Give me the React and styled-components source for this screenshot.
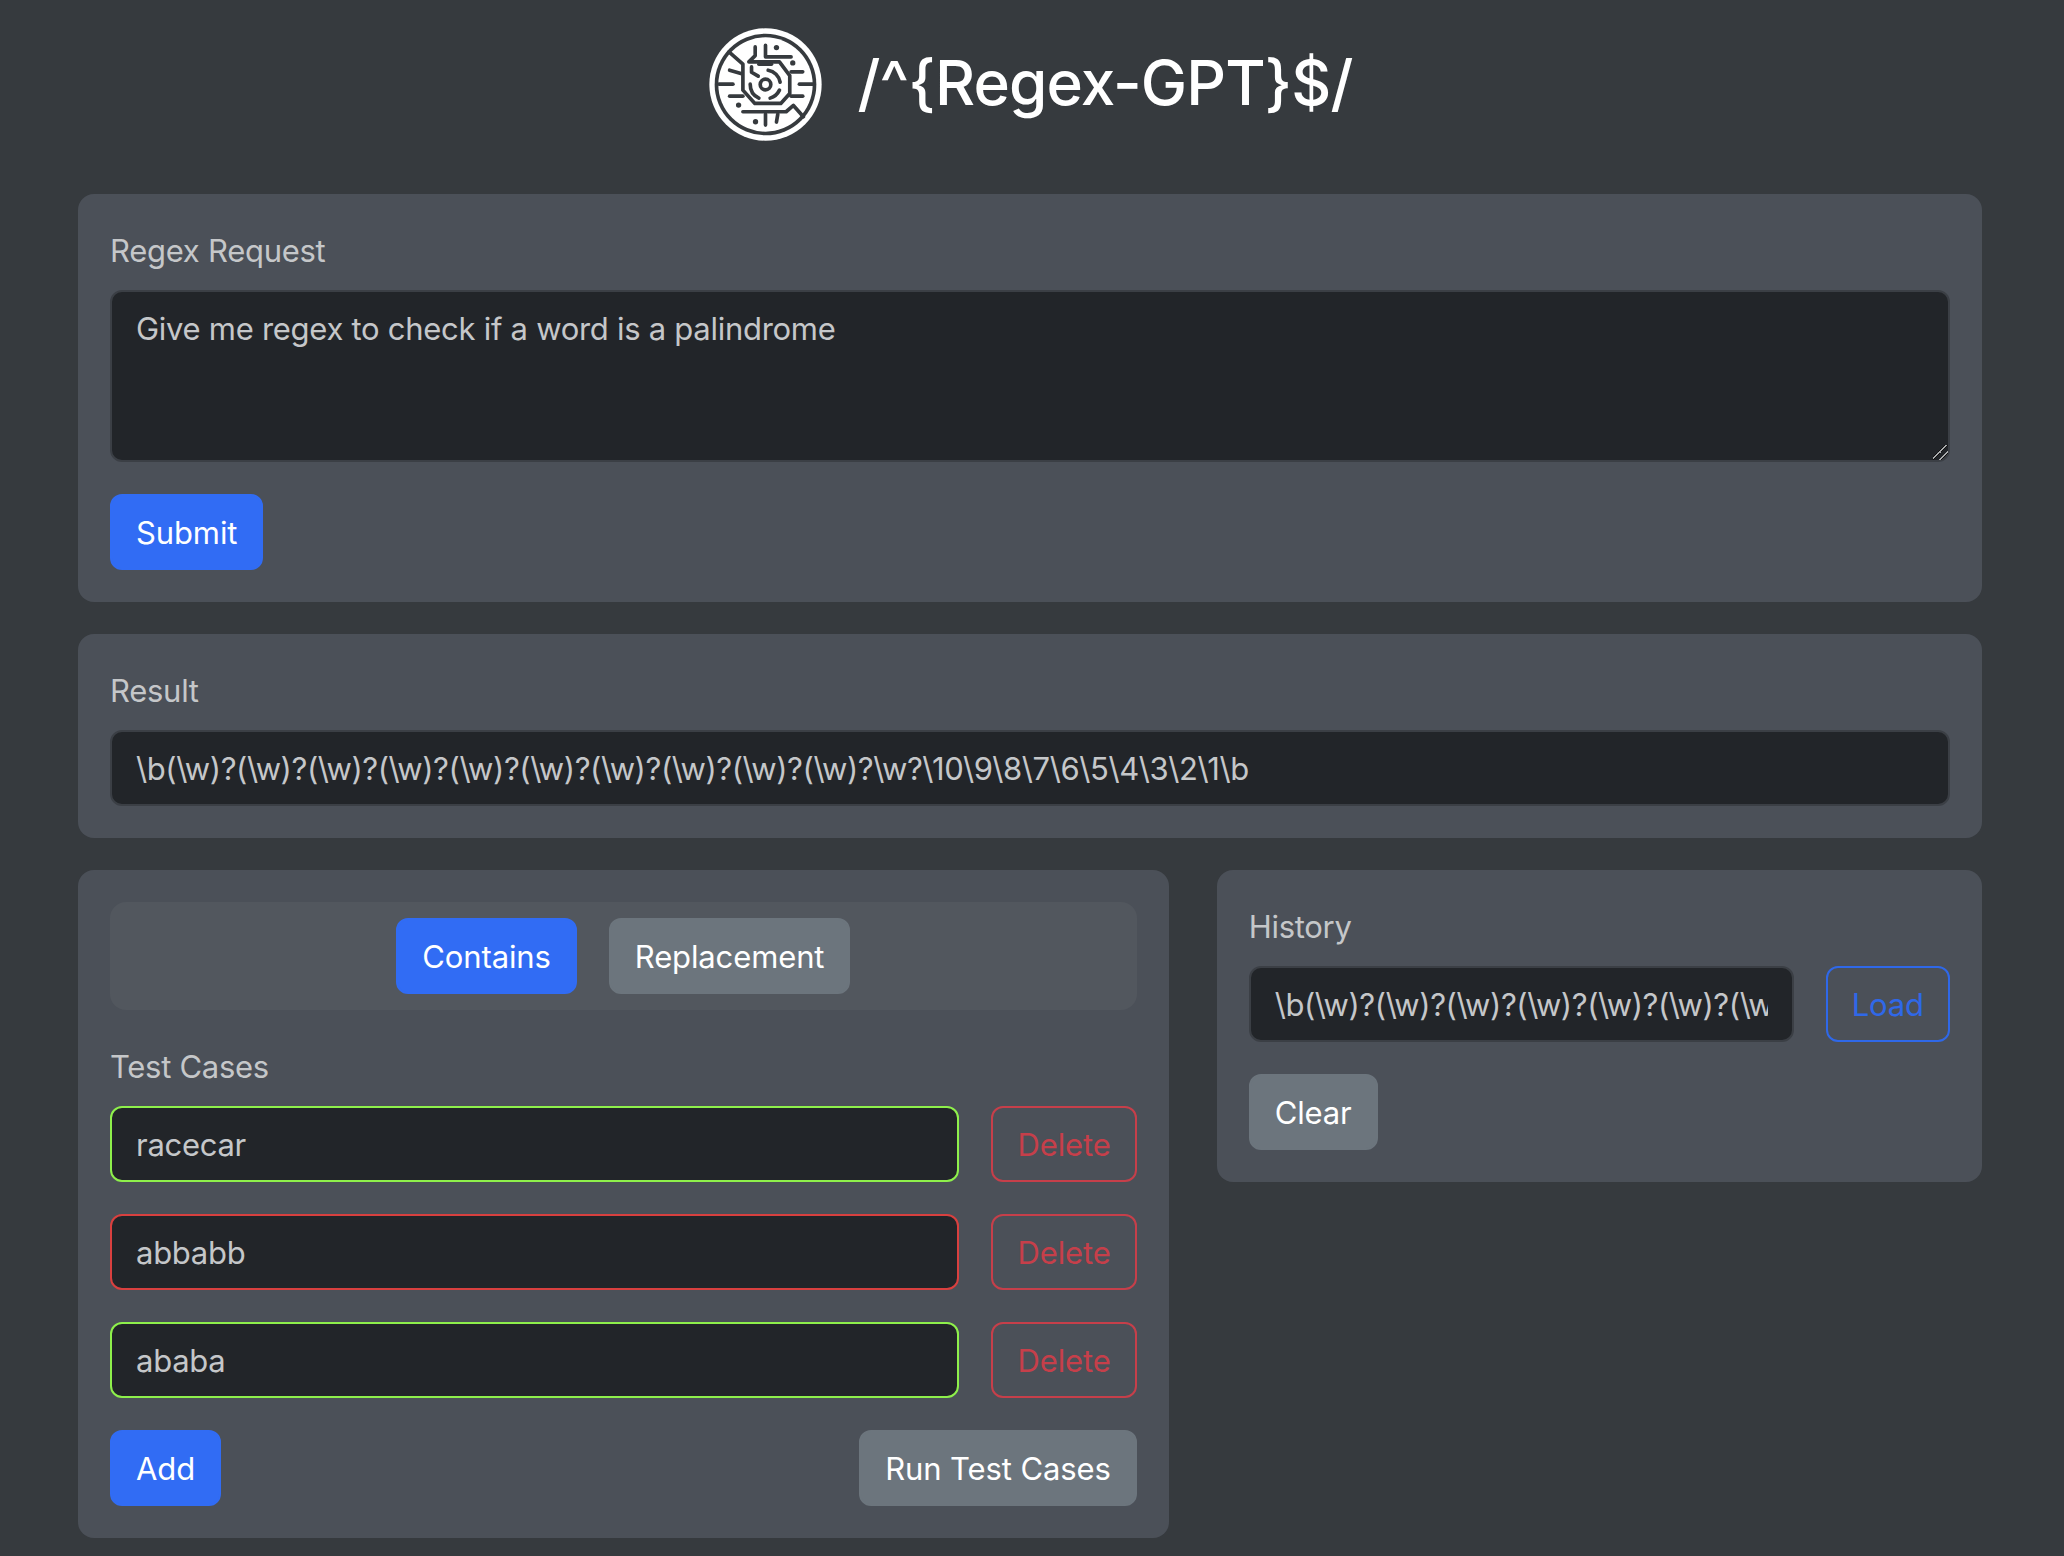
import React from 'react';
import styled, { createGlobalStyle } from 'styled-components';

const GlobalStyle = createGlobalStyle`
  html, body {
    margin: 0;
    padding: 0;
    background: #363a3e;
  }
  body {
    font-family: Inter, "Liberation Sans", sans-serif;
    font-size: 31px;
    letter-spacing: -0.28px;
    line-height: 48px;
    color: #c5c7c9;
  }
`

const Page = styled.div`
  display: flex;
  flex-direction: column;
  gap: 32px;
  box-sizing: border-box;
  width: 2064px;
  height: 1556px;
  overflow: hidden;
  padding: 0 82px 18px 78px;
`

const Header = styled.header`
  display: flex;
  align-items: center;
  justify-content: center;
  gap: 36px;
  height: 162px;
  padding: 7px 0 0 1px;
  box-sizing: border-box;
`

const Title = styled.h1`
  margin: 0 0 4px;
  font-size: 62px;
  letter-spacing: -0.88px;
  line-height: 76px;
  font-weight: 500;
  color: #fff;
`

const Panel = styled.section`
  background: #4b5058;
  border-radius: 16px;
  padding: 32px;
`

const Columns = styled.div`
  display: grid;
  grid-template-columns: 1090.67px 765.33px;
  column-gap: 48px;
  align-items: start;
`

const Label = styled.label`
  display: block;
  padding-top: 1px;
  margin-bottom: 15px;
`

const TextArea = styled.textarea`
  display: block;
  box-sizing: border-box;
  width: 100%;
  height: 172px;
  padding: 13px 24px 11px;
  background: #222529;
  border: 2px solid #3b3f45;
  border-radius: 12px;
  color: #c5c7c9;
  font: inherit;
  letter-spacing: inherit;
  outline: none;
  resize: vertical;

  &::-webkit-resizer {
    background: linear-gradient(
      135deg,
      transparent 40%,
      #111 40% 43%,
      #a9abad 43% 50%,
      #111 50% 53%,
      transparent 53% 68%,
      #111 68% 70%,
      #a9abad 70% 76%,
      #111 76% 78%,
      transparent 78%
    );
  }
`

const Input = styled.input`
  display: block;
  box-sizing: border-box;
  flex: 1;
  min-width: 0;
  width: 100%;
  height: 76px;
  padding: 1px 24px 0;
  background: #222529;
  border: 2px solid ${p => p.$border || '#3b3f45'};
  border-radius: 12px;
  color: #c5c7c9;
  font: inherit;
  letter-spacing: ${p => (p.$regex ? '-0.42px' : 'inherit')};
  outline: none;
`

const buttonColors = {
  primary: 'background: #316cf4; border-color: #316cf4; color: #fff;',
  secondary: 'background: #6c757d; border-color: #6c757d; color: #fff;',
  outlinePrimary: 'background: transparent; border-color: #2f68e8; color: #2f68e8;',
  outlineDanger: 'background: transparent; border-color: #c63f4a; color: #c63f4a;',
}

const Button = styled.button`
  flex: none;
  box-sizing: border-box;
  height: 76px;
  padding: 1px 24px 0;
  border: 2px solid;
  border-radius: 12px;
  font: inherit;
  letter-spacing: -0.12px;
  ${p => buttonColors[p.$variant]}
`

const SubmitRow = styled.div`
  display: flex;
  margin-top: 32px;
`

const Tabs = styled.div`
  display: flex;
  justify-content: center;
  gap: 32px;
  padding: 16px;
  margin-bottom: 32px;
  background: #52575e;
  border-radius: 16px;
`

const Row = styled.div`
  display: flex;
  gap: 32px;
  margin-bottom: 32px;
`

const Actions = styled.div`
  display: flex;
  justify-content: space-between;
`

const Logo = () => (
  <svg width="113" height="113" viewBox="88 53 340 340" aria-hidden="true">
    <circle cx="258" cy="223" r="169" fill="#fff" />
    <circle cx="258" cy="223" r="153" fill="#363a3e" />
    <circle cx="258" cy="223" r="142" fill="#fff" />
    <g fill="none" stroke="#363a3e" strokeWidth="11" strokeLinecap="round" strokeLinejoin="round">
      <path d="M148 125 L190 162 V240 L226 280 H304 L331 250 V196 L300 155 H208 L227 136 V110" />
      <path d="M258 105 V140 H335" />
      <path d="M150 180 L184 190" />
      <path d="M118 222 H160" />
      <path d="M150 258 H190" />
      <path d="M335 185 H370" />
      <path d="M360 222 H400" />
      <path d="M335 258 H370" />
      <path d="M190 305 H320 L342 286 L372 320" />
      <path d="M258 312 V345" />
      <path d="M295 312 L291 336" />
      <path d="M238 162 H276" />
      <path d="M216 170 V186 L236 198" />
      <path d="M266 180 A44 44 0 0 1 302 216" />
      <path d="M212 222 A46 46 0 0 0 238 264" />
      <path d="M272 264 A46 46 0 0 0 300 240" />
    </g>
    <circle cx="258" cy="223" r="16" fill="#fff" stroke="#363a3e" strokeWidth="11" />
    <g fill="#363a3e">
      <circle cx="291" cy="112" r="8" />
      <circle cx="340" cy="158" r="8" />
      <circle cx="177" cy="285" r="8" />
      <circle cx="228" cy="335" r="8" />
    </g>
  </svg>
)

const testCases = [
  { value: 'racecar', border: '#8ef04b' },
  { value: 'abbabb', border: '#d9403f' },
  { value: 'ababa', border: '#8ef04b' },
]

const result = '\\b(\\w)?(\\w)?(\\w)?(\\w)?(\\w)?(\\w)?(\\w)?(\\w)?(\\w)?(\\w)?\\w?\\10\\9\\8\\7\\6\\5\\4\\3\\2\\1\\b'

const App = () => {
  return (
    <Page>
      <GlobalStyle />
      <Header>
        <Logo />
        <Title>/^&#123;Regex-GPT&#125;$/</Title>
      </Header>
      <Panel>
        <Label>Regex Request</Label>
        <TextArea readOnly defaultValue="Give me regex to check if a word is a palindrome" />
        <SubmitRow>
          <Button $variant="primary">Submit</Button>
        </SubmitRow>
      </Panel>
      <Panel>
        <Label>Result</Label>
        <Input readOnly $regex defaultValue={result} />
      </Panel>
      <Columns>
        <Panel>
          <Tabs>
            <Button $variant="primary">Contains</Button>
            <Button $variant="secondary">Replacement</Button>
          </Tabs>
          <Label>Test Cases</Label>
          {testCases.map(t => (
            <Row key={t.value}>
              <Input readOnly defaultValue={t.value} $border={t.border} />
              <Button $variant="outlineDanger">Delete</Button>
            </Row>
          ))}
          <Actions>
            <Button $variant="primary">Add</Button>
            <Button $variant="secondary">Run Test Cases</Button>
          </Actions>
        </Panel>
        <Panel>
          <Label>History</Label>
          <Row>
            <Input readOnly $regex defaultValue={result} />
            <Button $variant="outlinePrimary">Load</Button>
          </Row>
          <Button $variant="secondary">Clear</Button>
        </Panel>
      </Columns>
    </Page>
  );
};

export default App;
